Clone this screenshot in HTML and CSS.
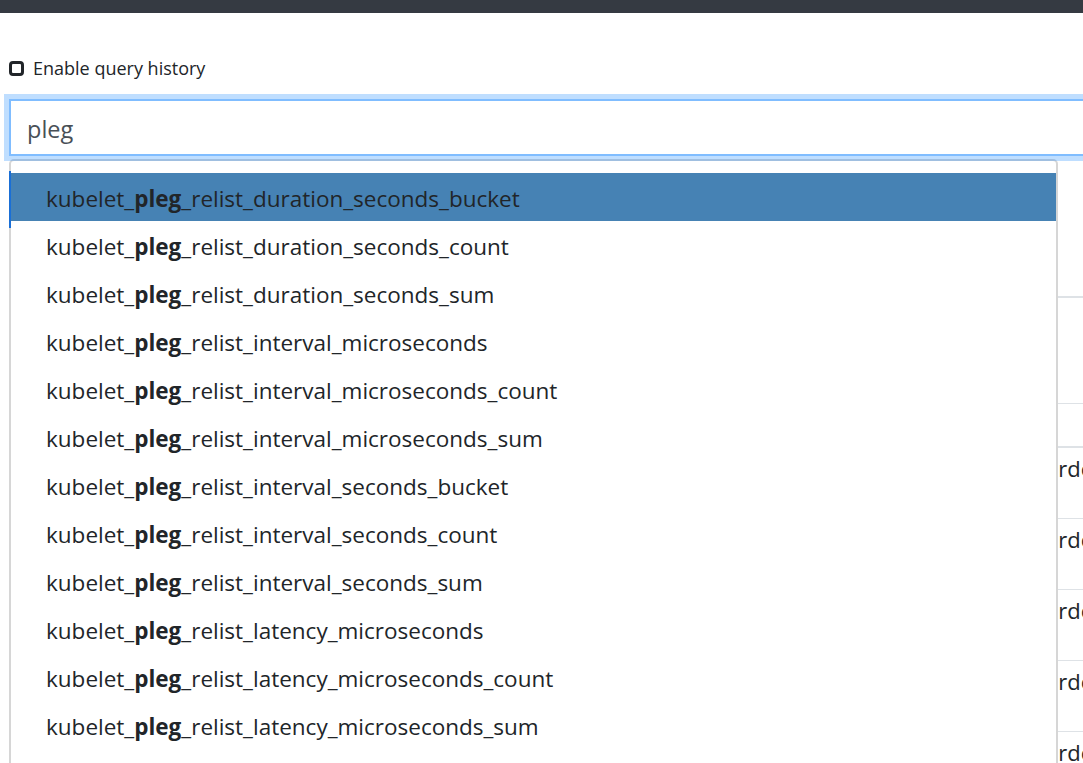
FILE: index.html
```html
<!DOCTYPE html>
<html lang="en">
<head>
<meta charset="utf-8">
<title>Prometheus</title>
<link rel="stylesheet" href="styles.css">
</head>
<body>
<div class="navbar"></div>
<main class="page">
  <label class="history">
    <span class="checkbox"></span>
    <span class="history-label">Enable query history</span>
  </label>
  <div class="query">
    <div class="input">pleg</div>
    <ul class="dropdown">
      <li class="item active">kubelet_<b>pleg</b>_relist_duration_seconds_bucket</li>
      <li class="item">kubelet_<b>pleg</b>_relist_duration_seconds_count</li>
      <li class="item">kubelet_<b>pleg</b>_relist_duration_seconds_sum</li>
      <li class="item">kubelet_<b>pleg</b>_relist_interval_microseconds</li>
      <li class="item">kubelet_<b>pleg</b>_relist_interval_microseconds_count</li>
      <li class="item">kubelet_<b>pleg</b>_relist_interval_microseconds_sum</li>
      <li class="item">kubelet_<b>pleg</b>_relist_interval_seconds_bucket</li>
      <li class="item">kubelet_<b>pleg</b>_relist_interval_seconds_count</li>
      <li class="item">kubelet_<b>pleg</b>_relist_interval_seconds_sum</li>
      <li class="item">kubelet_<b>pleg</b>_relist_latency_microseconds</li>
      <li class="item">kubelet_<b>pleg</b>_relist_latency_microseconds_count</li>
      <li class="item">kubelet_<b>pleg</b>_relist_latency_microseconds_sum</li>
    </ul>
  </div>
  <section class="results">
    <div class="toolbar"></div>
    <div class="thead"></div>
    <div class="row"><span class="cell">order</span></div>
    <div class="row"><span class="cell">order</span></div>
    <div class="row"><span class="cell">order</span></div>
    <div class="row"><span class="cell">order</span></div>
    <div class="row"><span class="cell">order</span></div>
  </section>
</main>
</body>
</html>
```
FILE: styles.css
```css
html, body {
  margin: 0;
  padding: 0;
  background: #fff;
  overflow: hidden;
  height: 763px;
}

body {
  font-family: "Open Sans", "Noto Sans", sans-serif;
  color: #212529;
}

.navbar {
  height: 13px;
  background: #353a42;
}

.page {
  width: 1120px;
  padding: 42px 0 0 9px;
}

.history {
  display: flex;
  align-items: center;
  height: 27px;
  font-size: 18px;
  line-height: 27px;
}

.checkbox {
  box-sizing: border-box;
  width: 15px;
  height: 15px;
  border: 3px solid #212529;
  border-radius: 4px;
  margin-right: 9px;
}

.history-label {
  color: #212529;
}

.query {
  position: relative;
  margin-top: 17px;
}

.input {
  position: relative;
  z-index: 2;
  box-sizing: border-box;
  height: 57px;
  border: 2px solid #80bdff;
  box-shadow: 0 0 0 5px rgba(0, 123, 255, 0.25);
  padding: 3px 0 0 16px;
  display: flex;
  align-items: center;
  font-size: 23.5px;
  color: #495057;
  background: #fff;
}

.dropdown {
  position: absolute;
  z-index: 1;
  top: 60px;
  left: 0;
  box-sizing: border-box;
  width: 1049px;
  margin: 0;
  padding: 12px 0 40px 0;
  list-style: none;
  background: #fff;
  border: 2px solid #d6d6d6;
  border-radius: 5px;
}

.dropdown::before {
  content: "";
  position: absolute;
  top: 10px;
  left: -2px;
  width: 2px;
  height: 57px;
  background: #1a6fd6;
}

.item {
  height: 48px;
  line-height: 51px;
  padding-left: 35px;
  font-size: 22.5px;
  color: #212529;
  white-space: nowrap;
  overflow: hidden;
}

.item b {
  font-weight: 700;
}

.item.active {
  background: #4682b4;
}

.results {
  margin-top: 140px;
  border-top: 2px solid #dee2e6;
}

.toolbar {
  height: 105px;
}

.thead {
  height: 42px;
  border-top: 1px solid #dee2e6;
  border-bottom: 2px solid #dee2e6;
}

.row {
  height: 70px;
  border-bottom: 1px solid #dee2e6;
  padding-left: 1036px;
  box-sizing: content-box;
}

.cell {
  display: block;
  padding-top: 4px;
  font-size: 22px;
  line-height: 33px;
  color: #212529;
}
```
